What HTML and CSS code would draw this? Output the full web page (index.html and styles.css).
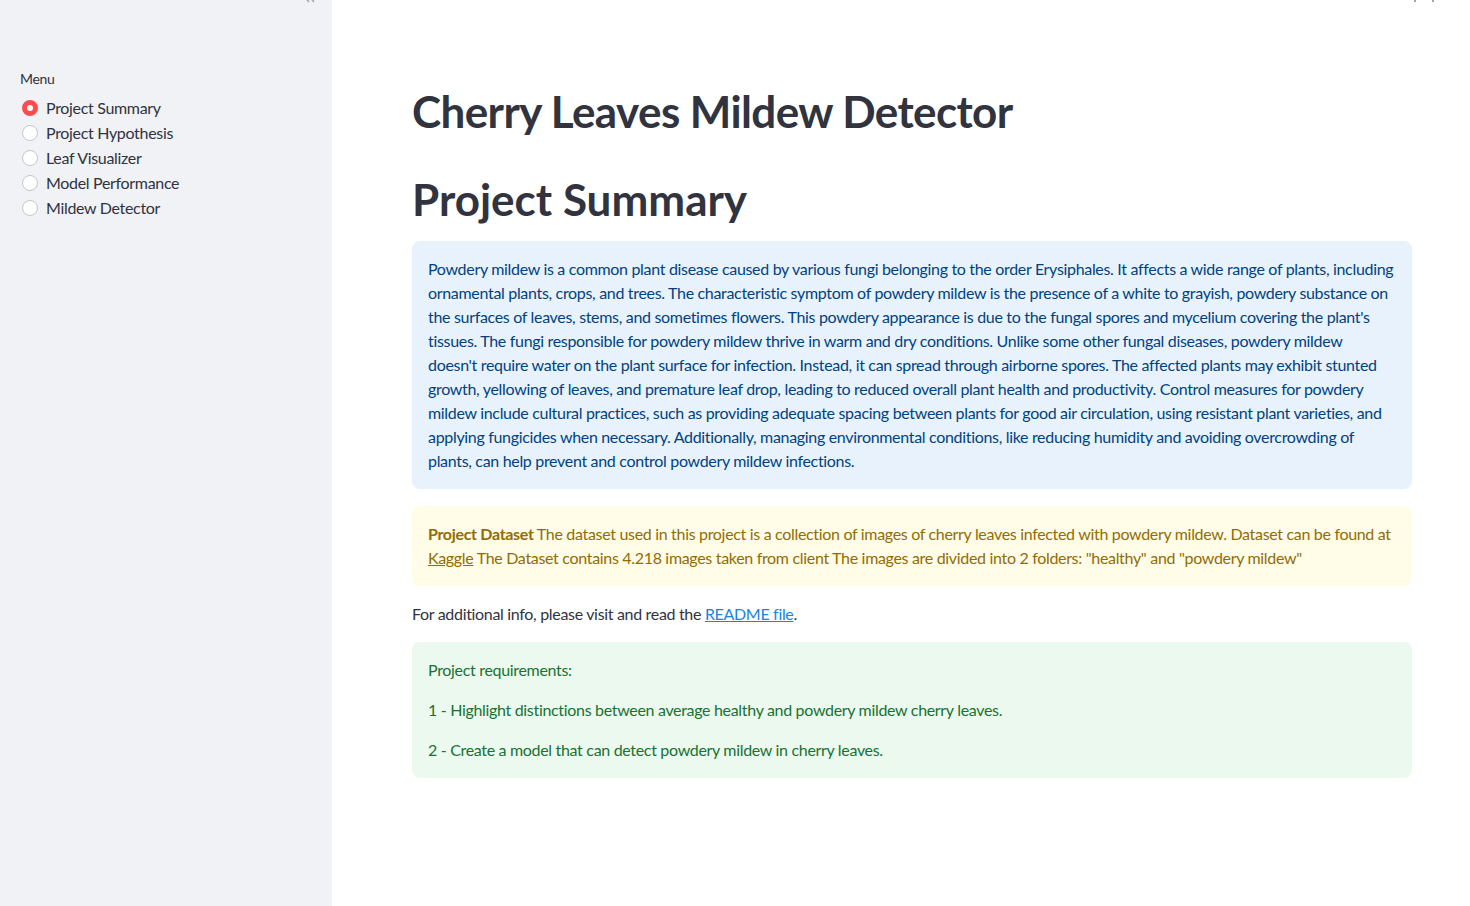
FILE: index.html
```html
<!DOCTYPE html>
<html>
<head>
<meta charset="utf-8">
<link rel="stylesheet" href="styles.css">
</head>
<body>
<div class="app">
  <aside class="sidebar">
    <svg class="corner-icon left-icon" width="20" height="20" viewBox="0 0 20 20"><path d="M11 4 L6 10 L11 16 M16 4 L11 10 L16 16" stroke="#a3a8b8" stroke-width="1.6" fill="none"/></svg>
    <div class="menu-label">Menu</div>
    <div class="radios">
      <label class="radio"><span class="dot on"></span><span>Project Summary</span></label>
      <label class="radio"><span class="dot"></span><span>Project Hypothesis</span></label>
      <label class="radio"><span class="dot"></span><span>Leaf Visualizer</span></label>
      <label class="radio"><span class="dot"></span><span>Model Performance</span></label>
      <label class="radio"><span class="dot"></span><span>Mildew Detector</span></label>
    </div>
  </aside>
  <main class="main">
    <svg class="corner-icon right-icon" width="30" height="20" viewBox="0 0 30 20"><path d="M5 4 L5 16 M23 4 L23 16" stroke="#8a8e99" stroke-width="1.6" fill="none"/></svg>
    <div class="content">
      <h1>Cherry Leaves Mildew Detector</h1>
      <h1 class="second">Project Summary</h1>
      <div class="alert info">
        <p>Powdery mildew is a common plant disease caused by various fungi belonging to the order Erysiphales. It affects a wide range of plants, including ornamental plants, crops, and trees. The characteristic symptom of powdery mildew is the presence of a white to grayish, powdery substance on the surfaces of leaves, stems, and sometimes flowers. This powdery appearance is due to the fungal spores and mycelium covering the plant's tissues. The fungi responsible for powdery mildew thrive in warm and dry conditions. Unlike some other fungal diseases, powdery mildew<br>doesn't require water on the plant surface for infection. Instead, it can spread through airborne spores. The affected plants may exhibit stunted growth, yellowing of leaves, and premature leaf drop, leading to reduced overall plant health and productivity. Control measures for powdery mildew include cultural practices, such as providing adequate spacing between plants for good air circulation, using resistant plant varieties, and applying fungicides when necessary. Additionally, managing environmental conditions, like reducing humidity and avoiding overcrowding of plants, can help prevent and control powdery mildew infections.</p>
      </div>
      <div class="alert warning">
        <p><strong>Project Dataset</strong> The dataset used in this project is a collection of images of cherry leaves infected with powdery mildew. Dataset can be found at <a href="#">Kaggle</a> The Dataset contains 4.218 images taken from client The images are divided into 2 folders: "healthy" and "powdery mildew"</p>
      </div>
      <p class="plain">For additional info, please visit and read the <a href="#" class="link">README file</a>.</p>
      <div class="alert success">
        <p>Project requirements:</p>
        <p>1 - Highlight distinctions between average healthy and powdery mildew cherry leaves.</p>
        <p>2 - Create a model that can detect powdery mildew in cherry leaves.</p>
      </div>
    </div>
  </main>
</div>
</body>
</html>
```

FILE: styles.css
```css
* { box-sizing: border-box; }
html, body { margin: 0; padding: 0; }
body {
  font-family: Lato, "Liberation Sans", sans-serif;
  color: #31333f;
  background: #fff;
  width: 1470px;
  height: 906px;
  overflow: hidden;
  letter-spacing: -0.32px;
}
.app { display: flex; height: 906px; }
.sidebar {
  position: relative;
  width: 332px;
  flex: 0 0 332px;
  background: #f0f2f6;
  padding: 70px 20px 0 20px;
}
.corner-icon { position: absolute; top: -14px; }
.left-icon { left: 298px; }
.right-icon { right: 30px; }
.menu-label { font-size: 14px; line-height: 18px; color: #31333f; }
.radios { display: flex; flex-direction: column; margin-top: 7px; }
.radio { display: flex; align-items: center; height: 25px; font-size: 16px; gap: 8px; color: #31333f; }
.dot {
  width: 16px; height: 16px; border-radius: 50%;
  border: 1px solid #c4c6cc; background: #fff;
  margin-left: 2px; flex: 0 0 16px;
}
.dot.on { border: 5px solid #ff4b4b; background: #fff; }
.main { position: relative; flex: 1; }
.content {
  width: 1000px;
  margin-left: 80px;
  padding-top: 85px;
  display: flex;
  flex-direction: column;
}
h1 {
  margin: 0;
  font-size: 44px;
  line-height: 52px;
  font-weight: 700;
  color: #31333f;
  letter-spacing: -0.6px;
}
h1.second { margin-top: 36px; margin-bottom: 16px; letter-spacing: 0; }
.alert {
  border-radius: 8px;
  padding: 16px;
  font-size: 16px;
  line-height: 24px;
}
.alert p { margin: 0; }
.alert p + p { margin-top: 16px; }
.info { background: #e8f2fc; color: #004280; }
.warning { background: #fffce7; color: #926c05; margin-top: 17px; }
.warning a { color: #926c05; }
.success { background: #ecf9ef; color: #177233; }
.plain { margin: 16px 0; font-size: 16px; line-height: 24px; }
.link { color: #1c83e1; }
```
